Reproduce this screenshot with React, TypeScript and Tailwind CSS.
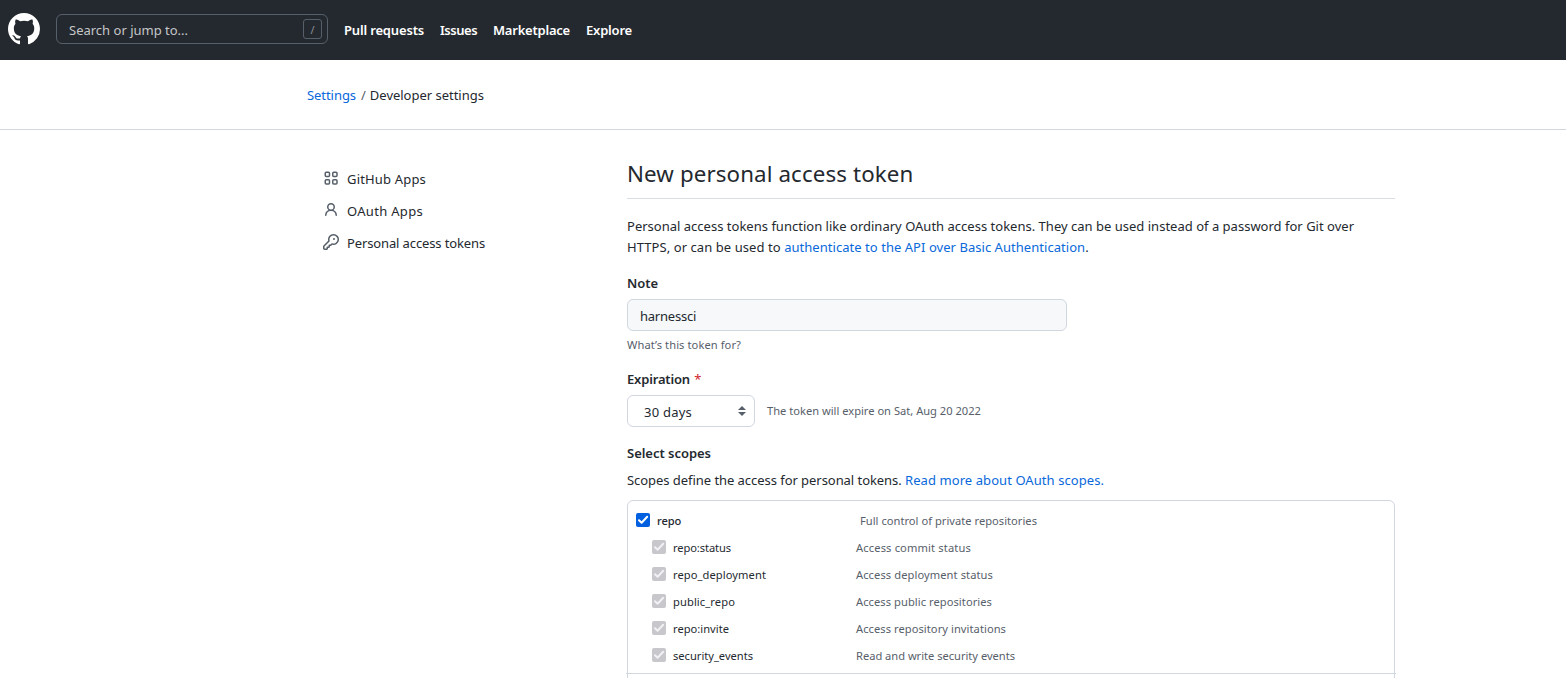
type Scope = { name: string; nameTracking: string; text: string; textTracking: string };

const scopes: Scope[] = [
  { name: "repo:status", nameTracking: "tracking-[-0.09px]", text: "Access commit status", textTracking: "tracking-[0.146px]" },
  { name: "repo_deployment", nameTracking: "tracking-[0.084px]", text: "Access deployment status", textTracking: "tracking-[0.088px]" },
  { name: "public_repo", nameTracking: "tracking-[0.109px]", text: "Access public repositories", textTracking: "tracking-[0.062px]" },
  { name: "repo:invite", nameTracking: "tracking-[0.022px]", text: "Access repository invitations", textTracking: "tracking-[0.059px]" },
  { name: "security_events", nameTracking: "tracking-[-0.007px]", text: "Read and write security events", textTracking: "tracking-[-0.016px]" },
];

function GitHubMark() {
  return (
    <svg width="32" height="32" viewBox="0 0 16 16" fill="#fff" aria-hidden="true">
      <path
        fillRule="evenodd"
        d="M8 0C3.58 0 0 3.58 0 8c0 3.54 2.29 6.53 5.47 7.59.4.07.55-.17.55-.38 0-.19-.01-.82-.01-1.49-2.01.37-2.53-.49-2.69-.94-.09-.23-.48-.94-.82-1.13-.28-.15-.68-.52-.01-.53.63-.01 1.08.58 1.23.82.72 1.21 1.87.87 2.33.66.07-.52.28-.87.51-1.07-1.78-.2-3.64-.89-3.64-3.95 0-.87.31-1.59.82-2.15-.08-.2-.36-1.02.08-2.12 0 0 .67-.21 2.2.82.64-.18 1.32-.27 2-.27.68 0 1.36.09 2 .27 1.53-1.04 2.2-.82 2.2-.82.44 1.1.16 1.92.08 2.12.51.56.82 1.27.82 2.15 0 3.07-1.87 3.75-3.65 3.95.29.25.54.73.54 1.48 0 1.07-.01 1.93-.01 2.2 0 .21.15.46.55.38A8.013 8.013 0 0016 8c0-4.42-3.58-8-8-8z"
      />
    </svg>
  );
}

function AppsIcon() {
  return (
    <svg width="16" height="16" viewBox="0 0 16 16" fill="none" stroke="#57606a" strokeWidth="1.5" aria-hidden="true">
      <rect x="2.25" y="2.25" width="4.25" height="4.25" rx="1" />
      <rect x="9.75" y="2.25" width="4.25" height="4.25" rx="1" />
      <rect x="2.25" y="9.75" width="4.25" height="4.25" rx="1" />
      <rect x="9.75" y="9.75" width="4.25" height="4.25" rx="1" />
    </svg>
  );
}

function PersonIcon() {
  return (
    <svg width="16" height="16" viewBox="0 0 16 16" fill="#57606a" aria-hidden="true">
      <path
        fillRule="evenodd"
        d="M10.5 5a2.5 2.5 0 11-5 0 2.5 2.5 0 015 0zm.061 3.073a4 4 0 10-5.123 0 6.004 6.004 0 00-3.431 5.142.75.75 0 001.498.07 4.5 4.5 0 018.99 0 .75.75 0 101.498-.07 6.005 6.005 0 00-3.432-5.142z"
      />
    </svg>
  );
}

function KeyIcon() {
  return (
    <svg width="16" height="16" viewBox="0 0 16 16" fill="#57606a" aria-hidden="true">
      <path
        fillRule="evenodd"
        d="M6.5 5.5a4 4 0 112.731 3.795.75.75 0 00-.768.18L7.44 10.5H6.25a.75.75 0 00-.75.75v1.19l-.06.06H4.25a.75.75 0 00-.75.75v1.19l-.06.06H1.75a.25.25 0 01-.25-.25v-1.69l5.024-5.023a.75.75 0 00.181-.768A3.995 3.995 0 016.5 5.5zm4-5.5a5.5 5.5 0 00-5.348 6.788L.22 11.72a.75.75 0 00-.22.53v2C0 15.216.784 16 1.75 16h2a.75.75 0 00.53-.22l.5-.5a.75.75 0 00.22-.53V14h.75a.75.75 0 00.53-.22l.5-.5a.75.75 0 00.22-.53V12h.75a.75.75 0 00.53-.22l.932-.932A5.5 5.5 0 1010.5 0zm.5 6a1 1 0 100-2 1 1 0 000 2z"
      />
    </svg>
  );
}

function Checkbox({ disabled = false }: { disabled?: boolean }) {
  return (
    <span
      role="checkbox"
      aria-checked="true"
      aria-disabled={disabled}
      className={`block size-3.5 shrink-0 rounded-[2px] ${disabled ? "bg-[#c7c7cc]" : "bg-[#0060df]"}`}
    >
      <svg width="14" height="14" viewBox="0 0 14 14" fill="none" stroke={disabled ? "#f1f1f3" : "#fff"} strokeWidth="2" aria-hidden="true">
        <path d="M3 7.2 5.6 9.8 11.2 3.8" strokeLinecap="round" strokeLinejoin="round" />
      </svg>
    </span>
  );
}

export default function App() {
  return (
    <div className="h-[678px] overflow-hidden bg-white font-['Noto_Sans','Open_Sans',sans-serif] text-[13px] leading-[21px] text-[#24292f]">
      <header className="flex h-[60px] items-center bg-[#24292f] pb-0.5 pl-2">
        <a href="#" className="block">
          <GitHubMark />
        </a>
        <div className="ml-4 flex h-[30px] w-[272px] items-center justify-between rounded-md border border-[#57606a] pr-[5px] pl-3">
          <span className="pt-0.5 text-[#c4c6c8]">Search or jump to...</span>
          <span className="flex h-5 w-[19px] items-center justify-center rounded-[3px] border border-[#57606a] text-[11px] text-[#8b9096]">/</span>
        </div>
        <nav className="ml-4 flex gap-4 pt-0.5 font-semibold text-white">
          <a href="#" className="w-20 tracking-[-0.165px] whitespace-nowrap">Pull requests</a>
          <a href="#" className="w-[37px] tracking-[-0.45px]">Issues</a>
          <a href="#" className="w-[77px] tracking-[-0.219px]">Marketplace</a>
          <a href="#" className="tracking-[-0.194px]">Explore</a>
        </nav>
      </header>

      <div className="flex h-[70px] items-center border-b border-[#d0d7de] pt-0.5 pl-[307px] whitespace-pre">
        <a href="#" className="tracking-[-0.058px] text-[#0969da]">Settings</a>
        <span className="pr-1 pl-[5px] text-[#57606a]">/</span>
        <span className="tracking-[-0.019px]">Developer settings</span>
      </div>

      <div className="flex pl-[307px]">
        <nav className="w-[320px] pt-[33px] pl-4">
          <a href="#" className="flex h-8 items-center gap-2">
            <span className="pb-0.5"><AppsIcon /></span>
            <span className="tracking-[0.175px]">GitHub Apps</span>
          </a>
          <a href="#" className="flex h-8 items-center gap-2">
            <span className="pb-0.5"><PersonIcon /></span>
            <span className="tracking-[0.313px]">OAuth Apps</span>
          </a>
          <a href="#" className="flex h-8 items-center gap-2">
            <span className="pb-0.5"><KeyIcon /></span>
            <span className="tracking-[-0.125px]">Personal access tokens</span>
          </a>
        </nav>

        <main className="w-[768px]">
          <h1 className="h-[69px] border-b border-[#d8dee4] pt-[26px] text-[22.3px] leading-9 tracking-[0.122px]">New personal access token</h1>

          <p className="mt-[17px] whitespace-nowrap">
            <span className="tracking-[0.011px]">
              Personal access tokens function like ordinary OAuth access tokens. They can be used instead of a password for Git over
            </span>
            <br />
            <span className="tracking-[0.07px]">HTTPS, or can be used to </span>
            <a href="#" className="tracking-[0.042px] text-[#0969da]">authenticate to the API over Basic Authentication</a>.
          </p>

          <label className="mt-[15px] block font-semibold tracking-[-0.053px]">Note</label>
          <div className="mt-[5px] flex h-8 w-[440px] items-center rounded-md border border-[#d0d7de] bg-[#f6f8fa] px-3 pt-0.5 tracking-[-0.234px]">
            harnessci
          </div>
          <p className="mt-[5px] text-[11.14px] leading-[18px] tracking-[0.08px] text-[#57606a]">What’s this token for?</p>

          <label className="mt-[15px] block font-semibold tracking-[-0.161px]">
            Expiration <span className="pl-px font-normal text-[#cf222e]">*</span>
          </label>
          <div className="mt-[5px] flex items-center">
            <div className="flex h-8 w-32 items-center justify-between rounded-md border border-[#d0d7de] pr-2 pl-4">
              <span className="pt-0.5 tracking-[0.229px]">30 days</span>
              <svg width="8" height="10" viewBox="0 0 8 10" fill="#57606a" aria-hidden="true">
                <path d="M4 0 8 4H0zM0 6h8L4 10z" />
              </svg>
            </div>
            <span className="pb-0.5 pl-3 text-[11.14px] text-[#57606a]">The token will expire on Sat, Aug 20 2022</span>
          </div>

          <h2 className="mt-4 font-semibold tracking-[-0.025px]">Select scopes</h2>
          <p className="mt-1.5 whitespace-pre">
            <span className="tracking-[-0.05px]">Scopes define the access for personal tokens. </span>
            <a href="#" className="tracking-[0.072px] text-[#0969da]">Read more about OAuth scopes.</a>
          </p>

          <div className="mt-[9px] h-[240px] rounded-md border border-[#d0d7de] text-[11.14px]">
            <div className="-mx-0.5 h-[173px] border-b border-[#d0d7de] px-0.5 pt-[5px]">
              <div className="flex h-[27px] items-center pl-2">
                <Checkbox />
                <span className="w-[203px] pt-0.5 pl-[7px] font-medium tracking-[-0.1px]">repo</span>
                <span className="pt-0.5 pl-[7px] tracking-[0.023px] text-[#57606a]">Full control of private repositories</span>
              </div>
              {scopes.map((s) => (
                <div key={s.name} className="flex h-[27px] items-center pl-6">
                  <Checkbox disabled />
                  <span className={`w-[190px] pt-0.5 pl-[7px] ${s.nameTracking}`}>{s.name}</span>
                  <span className={`pt-0.5 text-[#57606a] ${s.textTracking}`}>{s.text}</span>
                </div>
              ))}
            </div>
          </div>
        </main>
      </div>
    </div>
  );
}
